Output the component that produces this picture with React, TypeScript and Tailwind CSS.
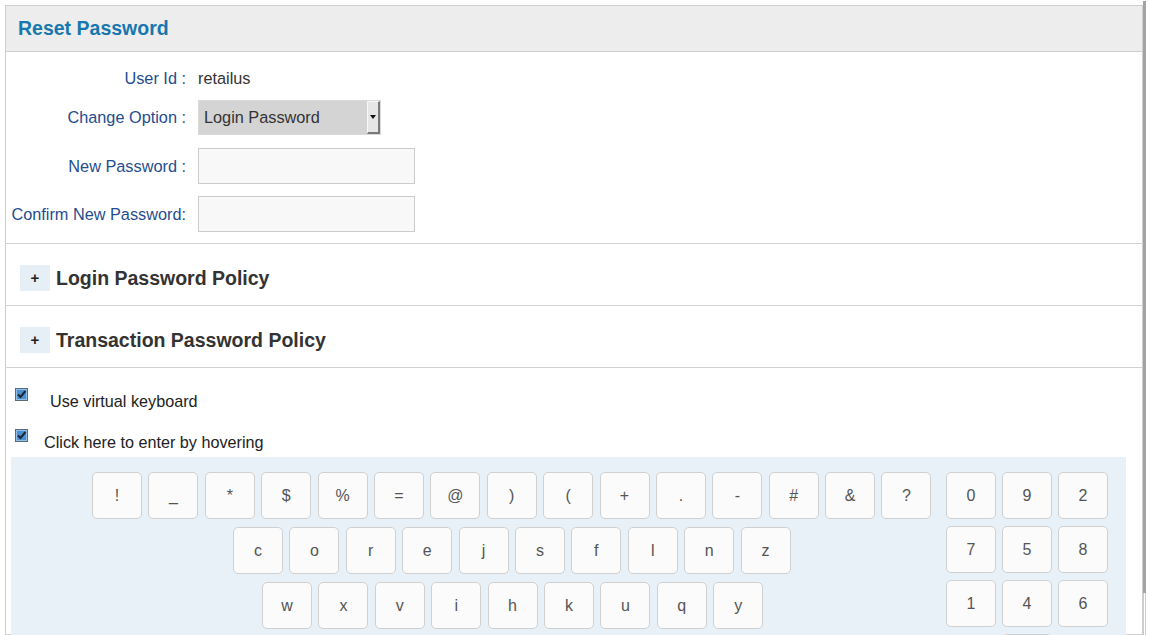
const symbolRow = ["!", "_", "*", "$", "%", "=", "@", ")", "(", "+", ".", "-", "#", "&", "?"];
const letterRowA = ["c", "o", "r", "e", "j", "s", "f", "l", "n", "z"];
const letterRowB = ["w", "x", "v", "i", "h", "k", "u", "q", "y"];
const numKeys = ["0", "9", "2", "7", "5", "8", "1", "4", "6"];

function Key({ label }: { label: string }) {
  return (
    <div className="w-[50px] h-[47px] shrink-0 flex items-center justify-center rounded-[5px] border border-[#d0d0d0] bg-[#fbfbfb] text-[16px] text-[#555]">
      {label}
    </div>
  );
}

function CheckIcon() {
  return (
    <svg width="13" height="13" viewBox="0 0 13 13" className="shrink-0">
      <rect x="0.5" y="0.5" width="12" height="12" fill="#4d8fcf" stroke="#5b6b7b" />
      <rect x="1.5" y="1.5" width="10" height="10" fill="none" stroke="#8fc0ea" />
      <path d="M3 6.5 L5.5 9 L10.5 3" fill="none" stroke="#1b2633" strokeWidth="2" />
    </svg>
  );
}

function PolicyRow({ title }: { title: string }) {
  return (
    <div className="border-t border-[#d2d2d2] pt-[21px] pb-[14px] pl-[14px] flex items-center gap-[6px]">
      <div className="w-[30px] h-[26px] bg-[#e6eff6] flex items-center justify-center text-[15px] font-bold text-[#222]">+</div>
      <h3 className="text-[19.5px] leading-[26px] font-bold text-[#333]">{title}</h3>
    </div>
  );
}

export default function App() {
  return (
    <div className="w-[1149px] h-[635px] overflow-hidden bg-white font-['Liberation_Sans',Arial,sans-serif] flex">
      <div className="w-[5px] shrink-0" />
      <div className="w-[1138px] shrink-0 mt-[5px] border border-[#cfcfcf]">
        {/* header */}
        <div className="h-[46px] bg-[#ecedec] border-b border-[#cfcfcf] flex items-center pl-[12px] pt-[1px]">
          <h2 className="text-[19.5px] font-bold text-[#1777ae]">Reset Password</h2>
        </div>

        {/* form */}
        <div className="pt-[14px] pb-[11px] text-[16.3px]">
          <div className="flex items-center h-[24px]">
            <div className="w-[180px] text-right text-[#1f4d8e]">User Id :</div>
            <div className="pl-[12px] text-[#333]">retailus</div>
          </div>
          <div className="flex items-center mt-[10px]">
            <div className="w-[180px] text-right text-[#1f4d8e]">Change Option :</div>
            <div className="ml-[12px] w-[183px] h-[35px] bg-[#d4d4d4] border border-[#d9d9d9] flex items-center justify-between">
              <span className="pl-[5px] text-[#333]">Login Password</span>
              <div className="w-[13px] h-[33px] bg-[#e6e6e6] border-l border-t border-[#f8f8f8] border-r-2 border-b-2 border-r-[#7a7a7a] border-b-[#7a7a7a] flex items-center justify-center">
                <svg width="6" height="4" viewBox="0 0 6 4">
                  <path d="M0 0 H6 L3 4 Z" fill="#111" />
                </svg>
              </div>
            </div>
          </div>
          <div className="flex items-center mt-[13px]">
            <div className="w-[180px] text-right text-[#1f4d8e]">New Password :</div>
            <div className="ml-[12px] w-[217px] h-[36px] bg-[#f8f8f8] border border-[#cccccc]" />
          </div>
          <div className="flex items-center mt-[12px]">
            <div className="w-[180px] text-right text-[#1f4d8e] whitespace-nowrap">Confirm New Password:</div>
            <div className="ml-[12px] w-[217px] h-[36px] bg-[#f8f8f8] border border-[#cccccc]" />
          </div>
        </div>

        <PolicyRow title="Login Password Policy" />
        <PolicyRow title="Transaction Password Policy" />

        {/* virtual keyboard options */}
        <div className="border-t border-[#d2d2d2] pt-[20px] text-[16.2px] text-[#222]">
          <div className="flex items-start pl-[9px]">
            <CheckIcon />
            <span className="ml-[22px] mt-[3px] leading-[20px]">Use virtual keyboard</span>
          </div>
          <div className="flex items-start pl-[9px] mt-[18px]">
            <CheckIcon />
            <span className="ml-[16px] mt-[3px] leading-[20px]">Click here to enter by hovering</span>
          </div>
        </div>

        {/* keyboard */}
        <div className="ml-[5px] mt-[5px] w-[1115px] h-[200px] bg-[#e8f1f7] pt-[15px] pl-[81px] flex gap-[14.5px]">
          <div className="flex flex-col gap-[8px]">
            <div className="flex gap-[6.4px]">
              {symbolRow.map((k) => (
                <Key key={k} label={k} />
              ))}
            </div>
            <div className="flex gap-[6.4px] pl-[141px]">
              {letterRowA.map((k) => (
                <Key key={k} label={k} />
              ))}
            </div>
            <div className="flex gap-[6.4px] pl-[170px]">
              {letterRowB.map((k) => (
                <Key key={k} label={k} />
              ))}
            </div>
          </div>
          <div className="grid grid-cols-3 gap-x-[6px] gap-y-[7px] content-start">
            {numKeys.map((k) => (
              <Key key={k} label={k} />
            ))}
            <div className="col-start-2">
              <Key label="" />
            </div>
          </div>
        </div>
      </div>
      <div className="w-[3px] shrink-0 mt-[1px] flex flex-col">
        <div className="h-[592px] bg-[#a3a3a3]" />
        <div className="flex-1 border-x border-[#cccccc] bg-white" />
      </div>
    </div>
  );
}
